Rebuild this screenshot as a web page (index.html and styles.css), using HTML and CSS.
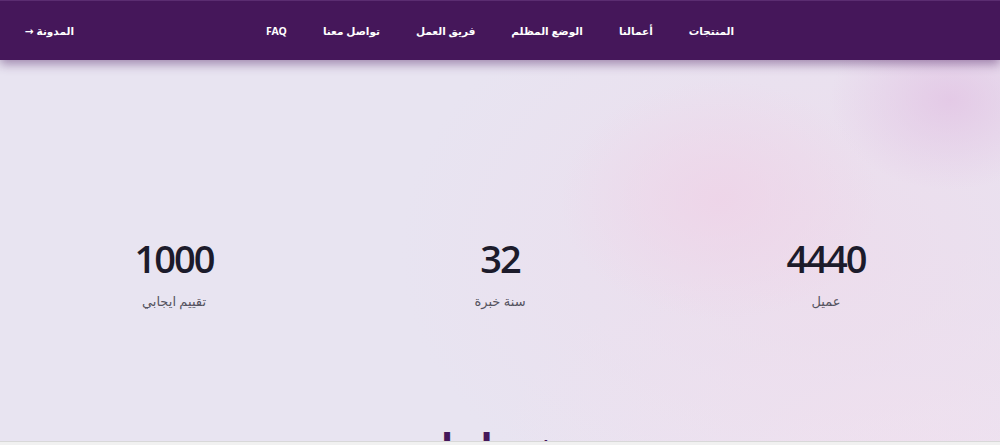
FILE: index.html
```html
<!DOCTYPE html>
<html lang="ar" dir="rtl">

<head>
    <meta charset="UTF-8">
    <meta name="viewport" content="width=device-width, initial-scale=1.0">
    <title>الرئيسية</title>
    <link rel="stylesheet" href="styles.css">
</head>

<body>
    <header class="topbar">
        <div class="brand"></div>
        <nav class="menu">
            <a href="#">المنتجات</a>
            <a href="#">أعمالنا</a>
            <a href="#">الوضع المظلم</a>
            <a href="#">فريق العمل</a>
            <a href="#">تواصل معنا</a>
            <a href="#">FAQ</a>
        </nav>
        <a class="blog-link" href="#">المدونة &rarr;</a>
    </header>

    <main class="page">
        <section class="stats">
            <div class="stat">
                <span class="stat-number">4440</span>
                <span class="stat-label">عميل</span>
            </div>
            <div class="stat">
                <span class="stat-number">32</span>
                <span class="stat-label">سنة خبرة</span>
            </div>
            <div class="stat">
                <span class="stat-number">1000</span>
                <span class="stat-label">تقييم ايجابي</span>
            </div>
        </section>

        <section class="services">
            <h2>خدماتنا</h2>
        </section>
    </main>

    <div class="scroll-edge"></div>
</body>

</html>
```

FILE: styles.css
```css
html, body {
    margin: 0;
    padding: 0;
}

body {
    font-family: "Noto Sans", "DejaVu Sans", sans-serif;
    background-color: #e8e4f1;
    background-image:
        radial-gradient(ellipse 120px 90px at 950px 100px, rgba(226, 196, 228, 0.8), rgba(226, 196, 228, 0) 100%),
        radial-gradient(ellipse 160px 120px at 720px 200px, rgba(238, 212, 232, 0.9), rgba(238, 212, 232, 0) 100%),
        radial-gradient(ellipse 420px 300px at 820px 250px, rgba(237, 220, 236, 0.9), rgba(237, 220, 236, 0) 100%),
        radial-gradient(ellipse 400px 200px at 900px 445px, rgba(240, 226, 240, 0.9), rgba(240, 226, 240, 0) 100%);
    background-repeat: no-repeat;
    min-height: 445px;
    overflow: hidden;
}

.topbar {
    display: grid;
    grid-template-columns: 1fr auto 1fr;
    align-items: center;
    height: 60px;
    padding: 0 25px;
    background-color: #45175a;
    border-top: 1px solid #5b2d71;
    box-sizing: border-box;
    box-shadow: 0 4px 10px rgba(69, 23, 90, 0.45);
    position: relative;
    z-index: 2;
}

.menu {
    display: flex;
    gap: 36px;
}

.menu a,
.blog-link {
    color: #ffffff;
    text-decoration: none;
    font-size: 10.5px;
    font-weight: bold;
}

.blog-link {
    justify-self: end;
}

.stats {
    display: grid;
    grid-template-columns: repeat(3, 1fr);
    width: 978px;
    margin: 0 auto;
    padding-top: 174px;
}

.stat {
    display: flex;
    flex-direction: column;
    align-items: center;
}

.stat-number {
    font-family: "Open Sans", "Noto Sans", sans-serif;
    font-size: 38px;
    line-height: 48px;
    font-weight: 600;
    letter-spacing: -2px;
    color: #1c1b2b;
}

.stat-label {
    margin-top: 10px;
    font-size: 13px;
    color: #55535f;
}

.services {
    padding-top: 113px;
    text-align: center;
}

.services h2 {
    margin: 0;
    font-size: 34px;
    line-height: 44px;
    color: #45175a;
}

.scroll-edge {
    position: fixed;
    left: 0;
    right: 0;
    bottom: 0;
    height: 3px;
    background-color: #f1f1f1;
    border-top: 1px solid #d8d8d8;
}
```
